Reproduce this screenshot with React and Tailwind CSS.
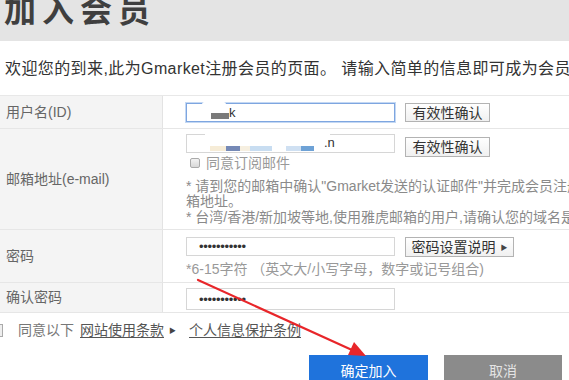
import React from "react";

function Btn({ children, className = "" }) {
  return (
    <div
      className={
        "flex items-center justify-center h-[19px] border border-[#b3b3b3] bg-gradient-to-b from-white to-[#f0f0f0] text-[14px] leading-none text-[#333] whitespace-nowrap " +
        className
      }
    >
      {children}
    </div>
  );
}

function Label({ children }) {
  return (
    <div className="w-[163px] shrink-0 bg-[#f4f4f4] border-r border-[#e3e3e3] flex items-center pl-[6px] text-[14px] text-[#666] whitespace-nowrap">
      {children}
    </div>
  );
}

export default function App() {
  return (
    <div className="relative w-[569px] h-[380px] overflow-hidden bg-white font-['Liberation_Sans','Noto_Sans_CJK_SC',sans-serif]">
      <div className="h-[41px] bg-[#e4e4e4] overflow-hidden pl-[4px]">
        <h1 className="mt-[-5px] text-[32px] leading-none font-bold tracking-[6px] text-[#3f3f3f] whitespace-nowrap">
          加入会员
        </h1>
      </div>
      <p className="mt-[18px] pl-[5px] text-[16px] leading-[20px] tracking-[0.4px] text-[#333] whitespace-nowrap">
        欢迎您的到来,此为Gmarket注册会员的页面。 请输入简单的信息即可成为会员
      </p>

      <div className="mt-[16px] border-t border-[#e8e8e8]">
        {/* Row 1 */}
        <div className="flex h-[33px] border-b border-[#e6e6e6]">
          <Label>用户名(ID)</Label>
          <div className="flex-1 pl-[23px] pt-[7px] flex items-start gap-[10px]">
            <div className="relative w-[209px] h-[19px] border border-[#7ea6e0] shadow-[0_0_0_1px_#c4d8f3] flex items-center pl-[24px]">
              <div className="absolute left-[14px] top-[-3px] w-[26px] h-[12px] rounded-full bg-white" />
              <span className="mt-[6px] w-[18px] h-[6px] bg-[#7a7a7a]" />
              <span className="text-[13px] leading-none text-[#333]">k</span>
            </div>
            <Btn className="w-[85px] h-[19px]">有效性确认</Btn>
          </div>
        </div>

        {/* Row 2 */}
        <div className="flex h-[101px] border-b border-[#e6e6e6]">
          <Label>邮箱地址(e-mail)</Label>
          <div className="flex-1 pl-[23px] pt-[5px] whitespace-nowrap">
            <div className="flex items-start gap-[10px]">
              <div className="relative w-[209px] h-[19px] border border-[#d6d6d6] flex items-end pb-[1px] pl-[23px]">
                <div className="absolute left-[18px] top-[-2px] w-[125px] h-[6px] bg-white" />
                <span className="w-[16px] h-[5px] bg-[#f6ecd7]" />
                <span className="w-[14px] h-[5px] bg-[#7589b6]" />
                <span className="w-[10px] h-[5px] bg-[#f6efe0]" />
                <span className="w-[22px] h-[5px] bg-[#c8ddf1]" />
                <span className="w-[14px] h-[5px]" />
                <span className="w-[15px] h-[5px] bg-[#cfe0f2]" />
                <span className="w-[13px] h-[5px] bg-[#6ea2d6]" />
                <span className="ml-[10px] mb-[2px] text-[13px] leading-none text-[#333]">.n</span>
              </div>
              <Btn className="w-[85px] h-[20px] mt-[3px]">有效性确认</Btn>
            </div>
            <div className="h-[12px] flex items-center gap-[6px] pl-[4px]">
              <span className="w-[10px] h-[10px] rounded-[2px] border border-[#aaa] bg-gradient-to-b from-[#f2f2f2] to-[#d8d8d8]" />
              <span className="text-[14px] leading-none text-[#999]">同意订阅邮件</span>
            </div>
            <div className="mt-[10px] text-[14px] leading-[14.5px] text-[#8a8a8a]">
              <div>* 请到您的邮箱中确认"Gmarket发送的认证邮件"并完成会员注册，如未收到请确认邮</div>
              <div>箱地址。</div>
              <div className="mt-[2px]">* 台湾/香港/新加坡等地,使用雅虎邮箱的用户,请确认您的域名是否正确</div>
            </div>
          </div>
        </div>

        {/* Row 3 */}
        <div className="flex h-[53px] border-b border-[#e6e6e6]">
          <Label>密码</Label>
          <div className="flex-1 pl-[23px] pt-[7px] whitespace-nowrap">
            <div className="flex items-start gap-[10px]">
              <div className="w-[209px] h-[19px] border border-[#d6d6d6] flex items-center pl-[12px] text-[13px] leading-none tracking-[-0.3px] text-[#333]">
                •••••••••••
              </div>
              <Btn className="w-[109px] h-[20px] gap-[5px]">
                密码设置说明<span className="text-[7px] text-[#444]">▶</span>
              </Btn>
            </div>
            <div className="mt-[5px] text-[14px] leading-[14px] text-[#999]">
              *6-15字符 （英文大/小写字母，数字或记号组合)
            </div>
          </div>
        </div>

        {/* Row 4 */}
        <div className="flex h-[30px] border-b border-[#e6e6e6] overflow-hidden">
          <Label>确认密码</Label>
          <div className="flex-1 pl-[23px] pt-[5px]">
            <div className="w-[209px] h-[22px] border border-[#d6d6d6] flex items-center pl-[12px] text-[13px] leading-none tracking-[-0.3px] text-[#333]">
              •••••••••••
            </div>
          </div>
        </div>
      </div>

      {/* Agreement */}
      <div className="mt-[8px] h-[18px] flex items-center text-[14px] leading-none whitespace-nowrap">
        <span className="ml-[-10px] w-[13px] h-[13px] border border-[#aaa] bg-[#eee]" />
        <span className="ml-[15px] text-[#777]">同意以下</span>
        <span className="ml-[6px] text-[#555] underline underline-offset-2">网站使用条款</span>
        <span className="ml-[5px] text-[7px] text-[#444]">▶</span>
        <span className="ml-[13px] text-[#555] underline underline-offset-2">个人信息保护条例</span>
      </div>

      {/* Buttons */}
      <div className="mt-[16px] ml-[309px] flex gap-[16px]">
        <div className="w-[119px] h-[32px] bg-[#1f73dc] text-white text-[14px] flex items-center justify-center">
          确定加入
        </div>
        <div className="w-[118px] h-[32px] bg-[#8b8b8b] text-[#e4e4e4] text-[14px] flex items-center justify-center">
          取消
        </div>
      </div>

      {/* Red arrow annotation */}
      <svg className="absolute inset-0 pointer-events-none" width="569" height="380" viewBox="0 0 569 380">
        <line x1="198" y1="280" x2="352" y2="350" stroke="#e8262a" strokeWidth="2.2" strokeLinecap="round" />
        <polygon points="366,356 348,355 354,342" fill="#e8262a" />
      </svg>
    </div>
  );
}
